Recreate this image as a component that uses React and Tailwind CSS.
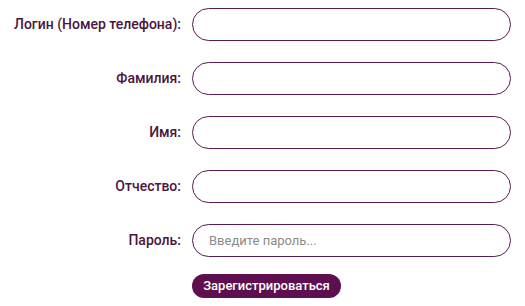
import React from 'react';

const fields = [
  { label: 'Логин (Номер телефона):', type: 'text' },
  { label: 'Фамилия:', type: 'text' },
  { label: 'Имя:', type: 'text' },
  { label: 'Отчество:', type: 'text' },
  { label: 'Пароль:', type: 'password', placeholder: 'Введите пароль...' },
];

export default function App() {
  return (
    <div className="w-[525px] h-[306px] bg-white pt-[8px] font-['Roboto',sans-serif]">
      <form className="flex flex-col gap-[21px]" onSubmit={(e) => e.preventDefault()}>
        {fields.map((f) => (
          <div key={f.label} className="flex items-center">
            <label className="w-[182px] pr-[1px] text-right text-[14px] font-medium text-[#4a1640]">
              {f.label}
            </label>
            <input
              type={f.type}
              placeholder={f.placeholder}
              className="ml-[10px] w-[319px] h-[33px] rounded-full border border-[#5b1a50] bg-white px-[16px] text-[13px] text-[#333] placeholder:text-[#8a8a8a] outline-none"
            />
          </div>
        ))}
      </form>
      <div className="mt-[16px] pl-[192px]">
        <button className="h-[24px] w-[149px] rounded-full bg-[#5d0f4f] text-[13px] font-medium text-white">
          Зарегистрироваться
        </button>
      </div>
    </div>
  );
}
